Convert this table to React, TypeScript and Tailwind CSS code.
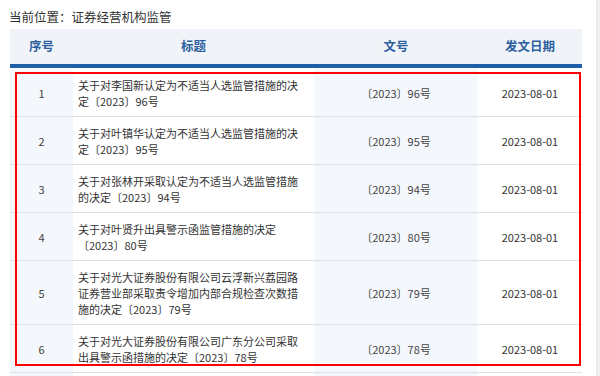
const rows = [
  { no: 1, title: '关于对李国新认定为不适当人选监管措施的决定〔2023〕96号', doc: '〔2023〕96号', date: '2023-08-01' },
  { no: 2, title: '关于对叶镇华认定为不适当人选监管措施的决定〔2023〕95号', doc: '〔2023〕95号', date: '2023-08-01' },
  { no: 3, title: '关于对张林开采取认定为不适当人选监管措施的决定〔2023〕94号', doc: '〔2023〕94号', date: '2023-08-01' },
  { no: 4, title: '关于对叶贤升出具警示函监管措施的决定〔2023〕80号', doc: '〔2023〕80号', date: '2023-08-01' },
  { no: 5, title: '关于对光大证券股份有限公司云浮新兴荔园路证券营业部采取责令增加内部合规检查次数措施的决定〔2023〕79号', doc: '〔2023〕79号', date: '2023-08-01' },
  { no: 6, title: '关于对光大证券股份有限公司广东分公司采取出具警示函措施的决定〔2023〕78号', doc: '〔2023〕78号', date: '2023-08-01' },
];

export default function App() {
  return (
    <div
      className="w-[600px] h-[376px] overflow-hidden bg-white flex"
      style={{ fontFamily: '"Noto Sans CJK SC", "Microsoft YaHei", sans-serif' }}
    >
      <div className="w-[582px] pl-[10px] relative">
        {/* Breadcrumb */}
        <div className="h-[29px] pt-[7px] -ml-px text-[12.5px] leading-[20px] text-[#333]">
          当前位置：证券经营机构监管
        </div>

        {/* Table header */}
        <div className="grid grid-cols-[63px_241px_164px_104px] h-[39px] bg-[#f0f4f9] border-b-4 border-[#1f5fa8] text-[12.5px] font-bold text-[#2d5f9f]">
          <div className="flex items-center justify-center">序号</div>
          <div className="flex items-center justify-center">标题</div>
          <div className="flex items-center justify-center">文号</div>
          <div className="flex items-center justify-center">发文日期</div>
        </div>

        {/* Rows */}
        <div className="pt-px text-[11px] leading-[16px] text-[#333]">
          {rows.map((r) => (
            <div
              key={r.no}
              className="grid grid-cols-[63px_241px_164px_104px] border-b border-[#dde1e6]"
            >
              <div className="bg-[#f4f7fb] flex items-center justify-center text-[#444]">{r.no}</div>
              <div className="pl-[5px] pr-[14px] pt-[8px] pb-[7px]">{r.title}</div>
              <div className="bg-[#f4f7fb] flex items-center justify-center text-[#444]">{r.doc}</div>
              <div className="flex items-center justify-center">{r.date}</div>
            </div>
          ))}
          {/* next row, scrolled below the fold */}
          <div className="grid grid-cols-[63px_241px_164px_104px] h-[8px]">
            <div className="bg-[#f4f7fb]" />
            <div />
            <div className="bg-[#f4f7fb]" />
            <div />
          </div>
        </div>

        {/* Highlight annotation */}
        <div className="absolute left-[15px] top-[72px] w-[566px] h-[294px] border-2 border-[#ff0000] pointer-events-none" />
      </div>

      <div className="flex-1" />
      <div className="w-[4px] h-full bg-[#f1f1f1] border-l border-[#e6e6e6]" />
    </div>
  );
}
